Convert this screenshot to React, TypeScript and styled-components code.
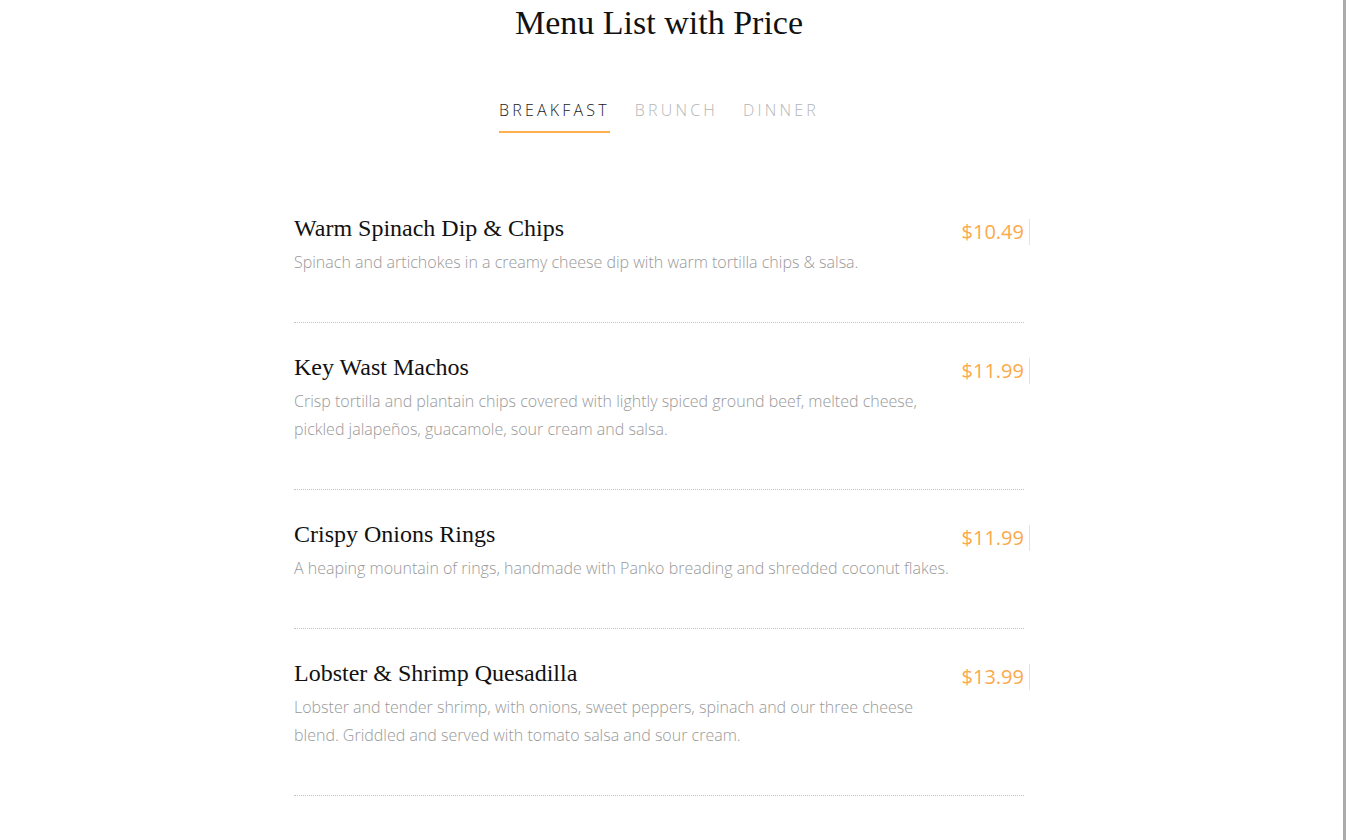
import React, { useState } from "react";
import styled, { createGlobalStyle } from "styled-components";

const GlobalStyle = createGlobalStyle`
  html, body {
    margin: 0;
    padding: 0;
    background: #ffffff;
    overflow: hidden;
  }
  * { box-sizing: border-box; }
`;

const Page = styled.div`
  display: flex;
  min-height: 100vh;
`;

const Main = styled.main`
  flex: 1;
  padding-right: 25px;
`;

const Rail = styled.div`
  width: 3px;
  background: #ababab;
`;

const Column = styled.div`
  width: 730px;
  margin: 0 auto;
`;

const Title = styled.h1`
  margin: 0;
  text-align: center;
  font-family: "Liberation Serif", "Times New Roman", serif;
  font-weight: 400;
  font-size: 34px;
  line-height: 46px;
  color: #111;
`;

const Tabs = styled.nav`
  display: flex;
  justify-content: center;
  gap: 25px;
  margin-top: 52px;
`;

const Tab = styled.button<{ $active: boolean }>`
  appearance: none;
  background: none;
  border: none;
  border-bottom: 2px solid ${(p) => (p.$active ? "#fdb04d" : "transparent")};
  padding: 0 0 9px;
  margin: 0;
  cursor: pointer;
  font-family: "Open Sans", sans-serif;
  font-weight: 300;
  font-size: 16px;
  line-height: 24px;
  letter-spacing: 3.2px;
  color: ${(p) => (p.$active ? "#1a1a1a" : "#b5b5b5")};
`;

const List = styled.ul`
  list-style: none;
  margin: 51px 0 0;
  padding: 0;
`;

const Item = styled.li`
  display: flex;
  align-items: flex-start;
  justify-content: space-between;
  padding: 29px 0 46px;
  border-bottom: 1px dotted #c4c4c4;
`;

const Info = styled.div`
  width: 660px;
`;

const ItemName = styled.h3`
  margin: 0;
  font-family: "Liberation Serif", "Times New Roman", serif;
  font-weight: 400;
  font-size: 24px;
  line-height: 30px;
  color: #111;
`;

const Desc = styled.p`
  margin: 5px 0 0;
  font-family: "Open Sans", sans-serif;
  font-weight: 300;
  font-size: 16px;
  line-height: 28px;
  color: #999;
`;

const Price = styled.span`
  margin-top: 6px;
  margin-right: -6px;
  padding-right: 5px;
  border-right: 1px solid #dfe3ec;
  font-family: "Open Sans", sans-serif;
  font-weight: 400;
  font-size: 20px;
  line-height: 26px;
  color: #fca94b;
  white-space: nowrap;
`;

const menus: Record<string, { name: string; desc: string; price: string }[]> = {
  BREAKFAST: [
    {
      name: "Warm Spinach Dip & Chips",
      desc: "Spinach and artichokes in a creamy cheese dip with warm tortilla chips & salsa.",
      price: "$10.49",
    },
    {
      name: "Key Wast Machos",
      desc: "Crisp tortilla and plantain chips covered with lightly spiced ground beef, melted cheese, pickled jalapeños, guacamole, sour cream and salsa.",
      price: "$11.99",
    },
    {
      name: "Crispy Onions Rings",
      desc: "A heaping mountain of rings, handmade with Panko breading and shredded coconut flakes.",
      price: "$11.99",
    },
    {
      name: "Lobster & Shrimp Quesadilla",
      desc: "Lobster and tender shrimp, with onions, sweet peppers, spinach and our three cheese blend. Griddled and served with tomato salsa and sour cream.",
      price: "$13.99",
    },
  ],
};
menus.BRUNCH = menus.BREAKFAST;
menus.DINNER = menus.BREAKFAST;

const tabs = ["BREAKFAST", "BRUNCH", "DINNER"];

export default function App() {
  const [active, setActive] = useState("BREAKFAST");
  return (
    <>
      <GlobalStyle />
      <Page>
        <Main>
          <Column>
            <Title>Menu List with Price</Title>
            <Tabs>
              {tabs.map((t) => (
                <Tab key={t} $active={t === active} onClick={() => setActive(t)}>
                  {t}
                </Tab>
              ))}
            </Tabs>
            <List>
              {menus[active].map((m) => (
                <Item key={m.name}>
                  <Info>
                    <ItemName>{m.name}</ItemName>
                    <Desc>{m.desc}</Desc>
                  </Info>
                  <Price>{m.price}</Price>
                </Item>
              ))}
            </List>
          </Column>
        </Main>
        <Rail />
      </Page>
    </>
  );
}
